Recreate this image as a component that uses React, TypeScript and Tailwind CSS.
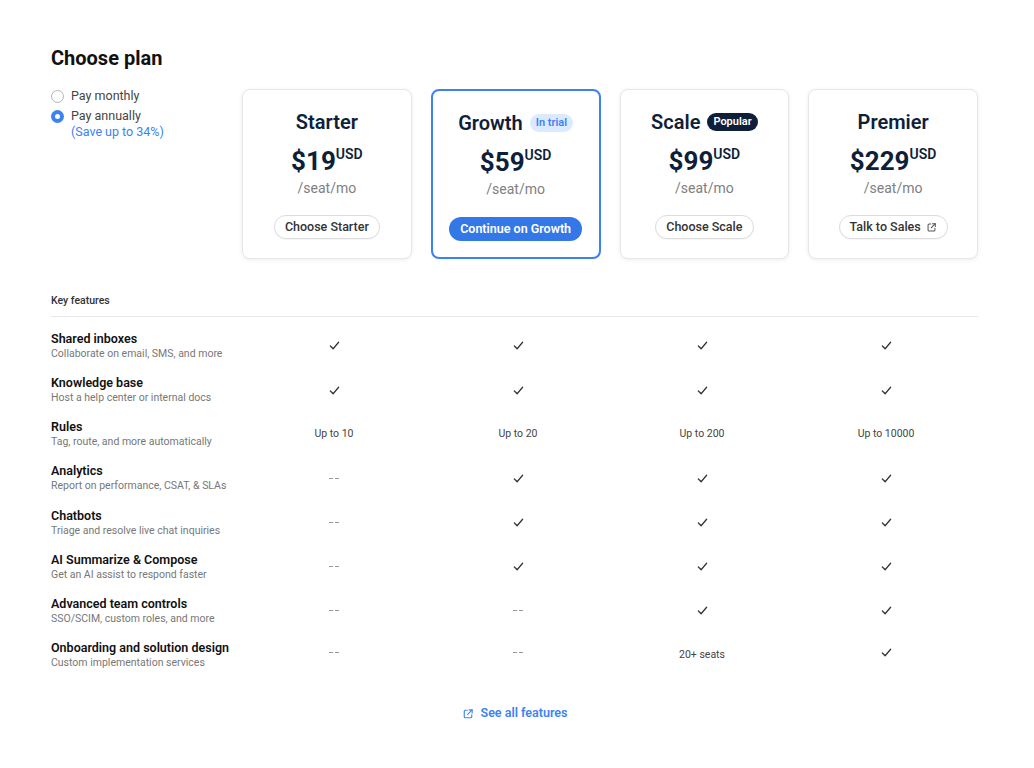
import React, { useState } from "react";

type Cell = "check" | "dash" | string;

const features: { title: string; desc: string; cells: Cell[] }[] = [
  { title: "Shared inboxes", desc: "Collaborate on email, SMS, and more", cells: ["check", "check", "check", "check"] },
  { title: "Knowledge base", desc: "Host a help center or internal docs", cells: ["check", "check", "check", "check"] },
  { title: "Rules", desc: "Tag, route, and more automatically", cells: ["Up to 10", "Up to 20", "Up to 200", "Up to 10000"] },
  { title: "Analytics", desc: "Report on performance, CSAT, & SLAs", cells: ["dash", "check", "check", "check"] },
  { title: "Chatbots", desc: "Triage and resolve live chat inquiries", cells: ["dash", "check", "check", "check"] },
  { title: "AI Summarize & Compose", desc: "Get an AI assist to respond faster", cells: ["dash", "check", "check", "check"] },
  { title: "Advanced team controls", desc: "SSO/SCIM, custom roles, and more", cells: ["dash", "dash", "check", "check"] },
  { title: "Onboarding and solution design", desc: "Custom implementation services", cells: ["dash", "dash", "20+ seats", "check"] },
];

function ExternalIcon({ className }: { className?: string }) {
  return (
    <svg viewBox="0 0 16 16" fill="none" stroke="currentColor" strokeWidth="1.5" strokeLinecap="round" strokeLinejoin="round" className={className}>
      <path d="M7 3H4.5A1.5 1.5 0 0 0 3 4.5v7A1.5 1.5 0 0 0 4.5 13h7a1.5 1.5 0 0 0 1.5-1.5V9" />
      <path d="M9.5 2.5h4v4" />
      <path d="M13.5 2.5 7.5 8.5" />
    </svg>
  );
}

function Check() {
  return (
    <svg viewBox="0 0 12 12" className="w-[11px] h-[11px] text-[#333]" fill="none" stroke="currentColor" strokeWidth="1.4" strokeLinecap="round" strokeLinejoin="round">
      <path d="M1.5 6.5 4.5 9.5 10.5 2.5" />
    </svg>
  );
}

function Dash() {
  return (
    <span className="flex gap-[2px] items-center h-[11px]">
      <span className="w-[4px] h-px bg-[#999]" />
      <span className="w-[4px] h-px bg-[#999]" />
    </span>
  );
}

function PlanCard({
  name,
  price,
  badge,
  action,
  active,
}: {
  name: string;
  price: string;
  badge?: React.ReactNode;
  action: React.ReactNode;
  active?: boolean;
}) {
  return (
    <div
      className={
        "h-[170px] rounded-lg bg-white flex flex-col items-center pt-[20px] " +
        (active
          ? "border-2 border-[#3b82f6]"
          : "border border-[#e5e7eb] shadow-[0_1px_4px_rgba(0,0,0,0.08)]")
      }
    >
      <div className="flex items-center gap-[7px] h-[24px]">
        <span className="text-[20px] font-semibold text-[#0f1f3a] leading-none">{name}</span>
        {badge}
      </div>
      <div className="flex items-start mt-[14px] text-[#0f1f3a]">
        <span className="text-[26px] font-bold leading-none">{price}</span>
        <span className="text-[14px] font-semibold leading-none -mt-[1px]">USD</span>
      </div>
      <div className="text-[14px] text-[#808080] mt-[7px] leading-none">/seat/mo</div>
      <div className="mt-[20px]">{action}</div>
    </div>
  );
}

function OutlineButton({ children }: { children: React.ReactNode }) {
  return (
    <button className="h-[24px] px-[10px] rounded-full border border-[#dcdcdc] bg-white text-[12.5px] font-medium text-[#333] flex items-center gap-[5px] shadow-[0_1px_1px_rgba(0,0,0,0.04)]">
      {children}
    </button>
  );
}

export default function App() {
  const [annual, setAnnual] = useState(true);

  return (
    <div className="w-[1034px] min-h-[768px] bg-white font-['Roboto',sans-serif] text-[#1a1a1a]">
      <div className="pl-[51px] pr-[56px] pt-[46px]">
        <div className="flex">
          <div className="w-[191px] shrink-0">
            <h1 className="text-[20px] font-bold leading-[24px] text-[#111]">Choose plan</h1>
            <div className="mt-[19px] flex flex-col gap-[5px] text-[12.5px] text-[#444]">
              <label className="flex items-center gap-[7px] h-[15px] cursor-pointer" onClick={() => setAnnual(false)}>
                <span className={"w-[13px] h-[13px] rounded-full flex items-center justify-center " + (!annual ? "bg-[#3b82f6]" : "border border-[#b5b5b5]")}>
                  {!annual && <span className="w-[5px] h-[5px] rounded-full bg-white" />}
                </span>
                Pay monthly
              </label>
              <div>
                <label className="flex items-center gap-[7px] h-[15px] cursor-pointer" onClick={() => setAnnual(true)}>
                  <span className={"w-[13px] h-[13px] rounded-full flex items-center justify-center " + (annual ? "bg-[#3b82f6]" : "border border-[#b5b5b5]")}>
                    {annual && <span className="w-[5px] h-[5px] rounded-full bg-white" />}
                  </span>
                  Pay annually
                </label>
                <div className="pl-[20px] text-[#3b82f6] leading-[16px]">(Save up to 34%)</div>
              </div>
            </div>
          </div>
          <div className="flex-1 grid grid-cols-4 gap-[19px] pt-[43px]">
            <PlanCard name="Starter" price="$19" action={<OutlineButton>Choose Starter</OutlineButton>} />
            <PlanCard
              name="Growth"
              price="$59"
              active
              badge={<span className="px-[6px] h-[18px] flex items-center rounded-full bg-[#dbeafe] text-[#3b82f6] text-[11px] font-semibold">In trial</span>}
              action={
                <button className="h-[24px] px-[11px] rounded-full bg-[#3478e8] text-white text-[12.5px] font-semibold">
                  Continue on Growth
                </button>
              }
            />
            <PlanCard
              name="Scale"
              price="$99"
              badge={<span className="px-[6px] h-[18px] flex items-center rounded-full bg-[#0f1f3a] text-white text-[11px] font-semibold">Popular</span>}
              action={<OutlineButton>Choose Scale</OutlineButton>}
            />
            <PlanCard
              name="Premier"
              price="$229"
              action={
                <OutlineButton>
                  Talk to Sales <ExternalIcon className="w-[11px] h-[11px] text-[#555]" />
                </OutlineButton>
              }
            />
          </div>
        </div>

        <div className="mt-[34px] text-[10.5px] font-medium text-[#333] pb-[7px] border-b border-[#e8e8e8]">Key features</div>

        <div className="pt-[7px]">
          {features.map((f) => (
            <div key={f.title} className="flex items-center h-[44.2px]">
              <div className="w-[191px] shrink-0 whitespace-nowrap">
                <div className="text-[12.5px] font-semibold text-[#111] leading-[16px]">{f.title}</div>
                <div className="text-[10.5px] text-[#777] leading-[14px]">{f.desc}</div>
              </div>
              <div className="flex-1 grid grid-cols-4">
                {f.cells.map((c, i) => (
                  <div key={i} className="flex justify-center text-[10.5px] text-[#444]">
                    {c === "check" ? <Check /> : c === "dash" ? <Dash /> : c}
                  </div>
                ))}
              </div>
            </div>
          ))}
        </div>

        <div className="flex justify-center mt-[27px]">
          <a className="flex items-center gap-[7px] text-[#3b82f6] text-[12.5px] font-semibold cursor-pointer">
            <ExternalIcon className="w-[12px] h-[12px]" />
            See all features
          </a>
        </div>
      </div>
    </div>
  );
}
